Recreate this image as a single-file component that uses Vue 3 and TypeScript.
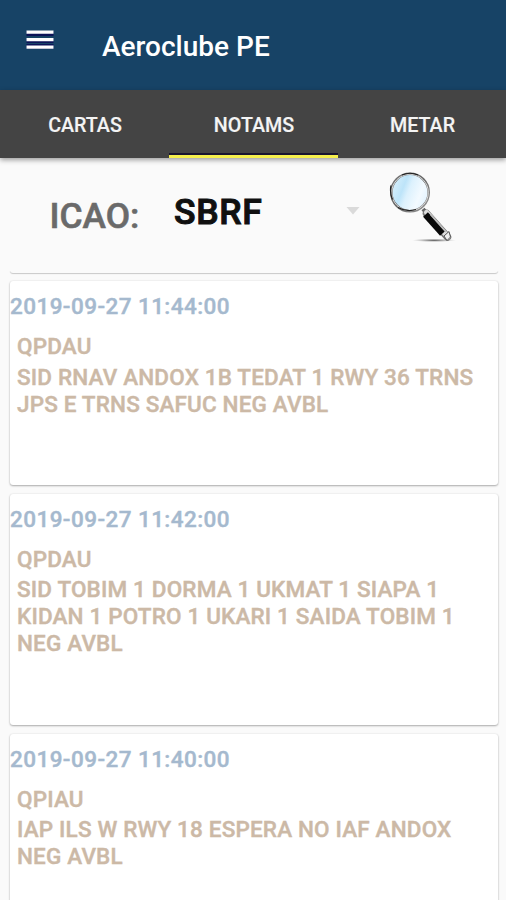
<script setup lang="ts">
import { ref } from 'vue'

interface Notam {
  date: string
  code: string
  lines: string[]
  size: 'short' | 'tall'
}

const tabs: string[] = ['CARTAS', 'NOTAMS', 'METAR']
const active = ref<string>('NOTAMS')

const notams: Notam[] = [
  {
    date: '2019-09-27 11:44:00',
    code: 'QPDAU',
    lines: ['SID RNAV ANDOX 1B TEDAT 1 RWY 36 TRNS', 'JPS E TRNS SAFUC NEG AVBL'],
    size: 'short',
  },
  {
    date: '2019-09-27 11:42:00',
    code: 'QPDAU',
    lines: ['SID TOBIM 1 DORMA 1 UKMAT 1 SIAPA 1', 'KIDAN 1 POTRO 1 UKARI 1 SAIDA TOBIM 1', 'NEG AVBL'],
    size: 'tall',
  },
  {
    date: '2019-09-27 11:40:00',
    code: 'QPIAU',
    lines: ['IAP ILS W RWY 18 ESPERA NO IAF ANDOX', 'NEG AVBL'],
    size: 'short',
  },
]
</script>

<template>
  <div class="screen">
    <header class="bar">
      <svg class="menu" width="28" height="20" viewBox="0 0 28 20">
        <path d="M0.5 3.5h27M0.5 10.5h27M0.5 16.5h27" stroke="#0c1458" stroke-width="5" />
        <path d="M0.5 2.2h27M0.5 9.7h27M0.5 17.2h27" stroke="#fff" stroke-width="3.2" />
      </svg>
      <h1 class="title">Aeroclube PE</h1>
    </header>

    <nav class="tabs">
      <button
        v-for="tab in tabs"
        :key="tab"
        class="tab"
        :class="{ on: tab === active }"
        @click="active = tab"
      >{{ tab }}</button>
    </nav>

    <section class="search">
      <span class="label">ICAO:</span>
      <span class="value">SBRF</span>
      <svg class="caret" width="14" height="8" viewBox="0 0 14 8"><path d="M0.5 0h13L7 7.5z" fill="#dadada" /></svg>
      <svg class="lens" width="68" height="74" viewBox="0 0 68 74">
        <defs>
          <linearGradient id="glass" x1="0" y1="0.3" x2="1" y2="0.7">
            <stop offset="0" stop-color="#d8f0fc" />
            <stop offset="0.3" stop-color="#bde4f9" />
            <stop offset="0.45" stop-color="#dcf1fd" />
            <stop offset="0.75" stop-color="#f3faff" />
            <stop offset="1" stop-color="#e0f2ff" />
          </linearGradient>
          <linearGradient id="rim" x1="0" y1="0" x2="1" y2="1">
            <stop offset="0" stop-color="#777" />
            <stop offset="0.5" stop-color="#666" />
            <stop offset="1" stop-color="#999" />
          </linearGradient>
          <radialGradient id="shade">
            <stop offset="0" stop-color="#555" />
            <stop offset="1" stop-color="#aaa" stop-opacity="0" />
          </radialGradient>
        </defs>
        <ellipse cx="45" cy="69.3" rx="22" ry="1.800" fill="url(#shade)" />
        <path d="M34 38L37 41.500" stroke="#666" stroke-width="4" />
        <path d="M37.500 42.500L58.500 66" stroke="#777" stroke-width="7.500" stroke-linecap="round" />
        <path d="M37.500 41.500L59 66" stroke="#ddd" stroke-width="5" stroke-linecap="round" />
        <path d="M36.500 43.500L53.500 62.500" stroke="#080808" stroke-width="6.500" />
        <path d="M41.500 43.500L57 61" stroke="#bbb" stroke-width="1.500" />
        <path d="M55 65l5-4.500 1.500 5.500-3.500 3.500z" fill="#eee" stroke="#555" />
        <circle cx="21" cy="21.500" r="18.700" fill="url(#glass)" stroke="url(#rim)" stroke-width="2.600" />
        <circle cx="21" cy="21.500" r="18.300" fill="none" stroke="#e2e2e2" stroke-width="0.900" />
        <path d="M13 4Q21 0.500 29 4M2 14.500Q0.500 21.500 3.500 28.500M9 36.500Q18 41.500 27 38.500" fill="none" stroke="#222" stroke-width="1.200" />
      </svg>
    </section>

    <main class="list">
      <div class="card stub"></div>
      <article v-for="n in notams" :key="n.date" class="card" :class="n.size">
        <div class="date">{{ n.date }}</div>
        <div class="code">{{ n.code }}</div>
        <div v-for="line in n.lines" :key="line" class="line">{{ line }}</div>
      </article>
    </main>
  </div>
</template>

<style>
body {
  margin: 0;
  background: #fafafa;
}
</style>

<style scoped>
.screen {
  width: 506px;
  height: 900px;
  overflow: hidden;
  display: flex;
  flex-direction: column;
  background: #fafafa;
  font-family: Roboto, 'Liberation Sans', sans-serif;
}
.bar {
  flex: none;
  height: 90px;
  box-sizing: border-box;
  background: #174366;
  display: flex;
  align-items: flex-start;
  padding: 30px 0 0 26px;
}
.title {
  margin: 1px 0 0 48px;
  font-size: 28px;
  line-height: 32px;
  font-weight: 500;
  color: #fff;
  white-space: nowrap;
}
.tabs {
  flex: none;
  height: 68px;
  display: grid;
  grid-template-columns: 169px 169px 168px;
  background: #444;
  box-shadow: 0 2px 5px rgba(0, 0, 0, 0.38);
}
.tab {
  border: 0;
  padding: 6px 0 0 1px;
  background: none;
  font: 500 19.700px/24px Roboto, 'Liberation Sans', sans-serif;
  color: #f4f4f4;
  -webkit-text-stroke: 0.15px #f4f4f4;
  border-bottom: 3px solid transparent;
}
.tab.on {
  border-bottom-color: #f5ee4c;
  box-shadow: inset 0 -2px #181430;
}
.search {
  flex: none;
  height: 112px;
  display: flex;
  align-items: flex-start;
  white-space: nowrap;
}
.label {
  width: 124px;
  padding: 37px 0 0 49.500px;
  box-sizing: border-box;
  width: 173px;
  font-size: 35.300px;
  line-height: 42px;
  font-weight: 500;
  color: #6a6a6a;
  -webkit-text-stroke: 0.6px #6a6a6a;
}
.value {
  box-sizing: border-box;
  width: 173px;
  padding: 33px 0 0 1px;
  font-size: 35.500px;
  line-height: 42px;
  font-weight: 500;
  letter-spacing: 0.7px;
  color: #101010;
  -webkit-text-stroke: 1px #101010;
}
.caret {
  margin-top: 49px;
}
.lens {
  margin: 13px 0 0 29px;
}
.list {
  padding: 0 8px 0 10px;
  display: flex;
  flex-direction: column;
  gap: 8.500px;
}
.card {
  flex: none;
  box-sizing: border-box;
  background: #fff;
  border-radius: 3px;
  box-shadow: 0 1px 2px rgba(0, 0, 0, 0.3), 0 0 2px rgba(0, 0, 0, 0.1);
  font-size: 22.5px;
  line-height: 26.600px;
  font-weight: 500;
  letter-spacing: 0.16px;
  -webkit-text-stroke: 0.4px currentColor;
  white-space: nowrap;
  padding-top: 12px;
}
.stub {
  height: 3px;
  padding: 0;
  margin-top: -0.500px;
  background: #fafafa;
  border-radius: 0 0 3px 3px;
  box-shadow: 0 1px 1px rgba(0, 0, 0, 0.2);
}
.short {
  height: 204px;
}
.tall {
  height: 231.500px;
}
.date {
  color: #a5b9ce;
  letter-spacing: 0.43px;
}
.code {
  margin: 13.500px 0 4.300px 7px;
  color: #ccb9a6;
}
.line {
  margin-left: 7px;
  color: #ccb9a6;
}
</style>
